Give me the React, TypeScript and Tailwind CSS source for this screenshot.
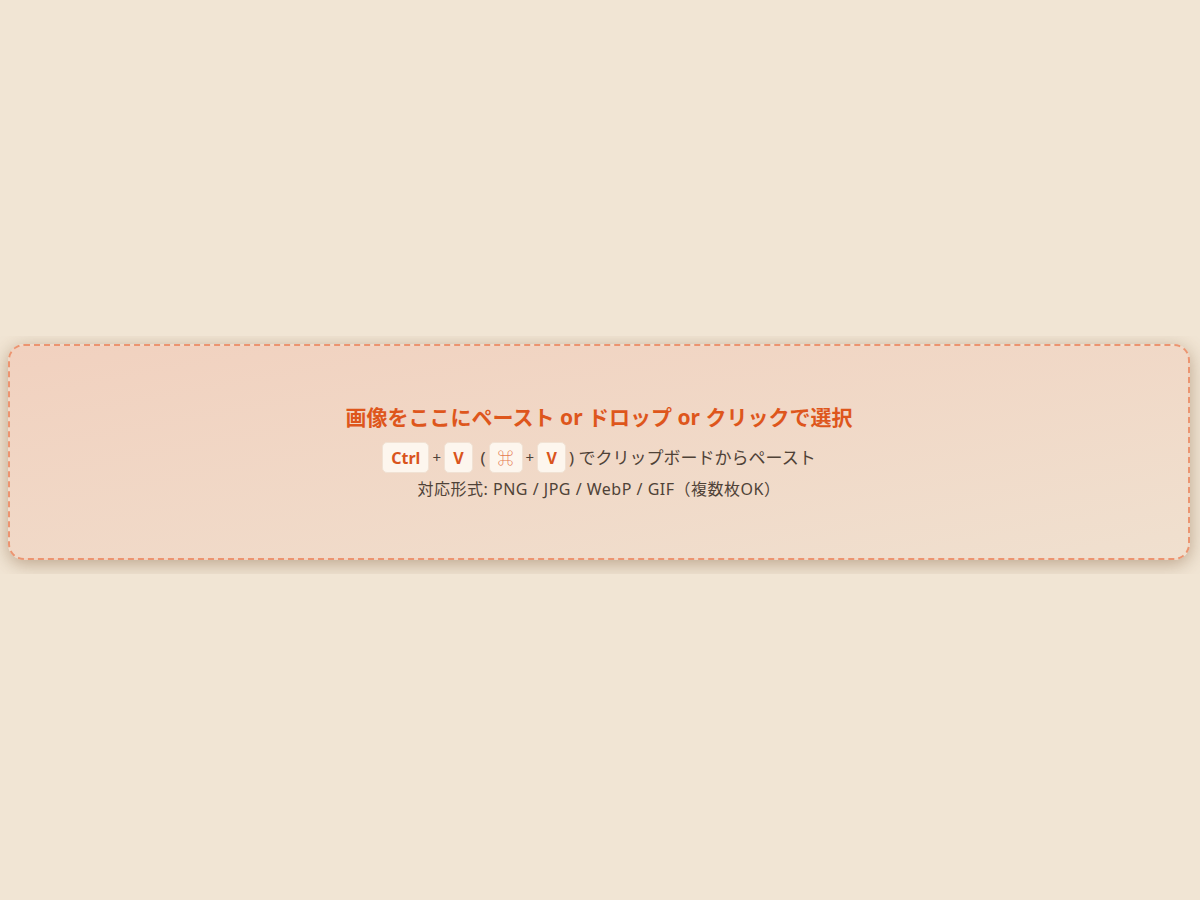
export default function App() {
  const kbd =
    "inline-flex items-center justify-center h-[31px] min-w-[29px] px-[8px] rounded-[5px] bg-[#fdf6ee] border border-[#f1e2d4] text-[#d9541c] font-bold text-[16px]";
  return (
    <div
      className="min-h-screen bg-[#f1e5d4] flex flex-col justify-center pt-[10px]"
      style={{ fontFamily: '"Noto Sans", "Noto Sans CJK JP", sans-serif' }}
    >
      <div className="overflow-hidden pt-2 pb-[14px] pl-2 pr-[10px]">
        <div className="h-[216px] rounded-2xl border-2 border-dashed border-[#ec9470] bg-gradient-to-br from-[#f1d1bf] to-[#f0e0cf] shadow-[0_4px_18px_rgba(110,70,35,0.4)] flex flex-col items-center justify-center text-[#4f4237]">
          <h2 className="text-[21px] font-bold text-[#de561c] leading-none mt-[4px]">
            画像をここにペースト or ドロップ or クリックで選択
          </h2>
          <div className="mt-[14px] flex items-center gap-[3px] text-[17px] whitespace-pre">
            <span className={kbd}>Ctrl</span>
            <span className="text-[15px]">+</span>
            <span className={kbd}>V</span>
            <span> (</span>
            <span className={kbd + " w-[34px] font-normal text-[#e5794c]"}>⌘</span>
            <span className="text-[15px]">+</span>
            <span className={kbd}>V</span>
            <span>) でクリップボードからペースト</span>
          </div>
          <p className="mt-[4px] text-[16px] tracking-[0.5px]">
            対応形式: PNG / JPG / WebP / GIF（複数枚OK）
          </p>
        </div>
      </div>
    </div>
  );
}
